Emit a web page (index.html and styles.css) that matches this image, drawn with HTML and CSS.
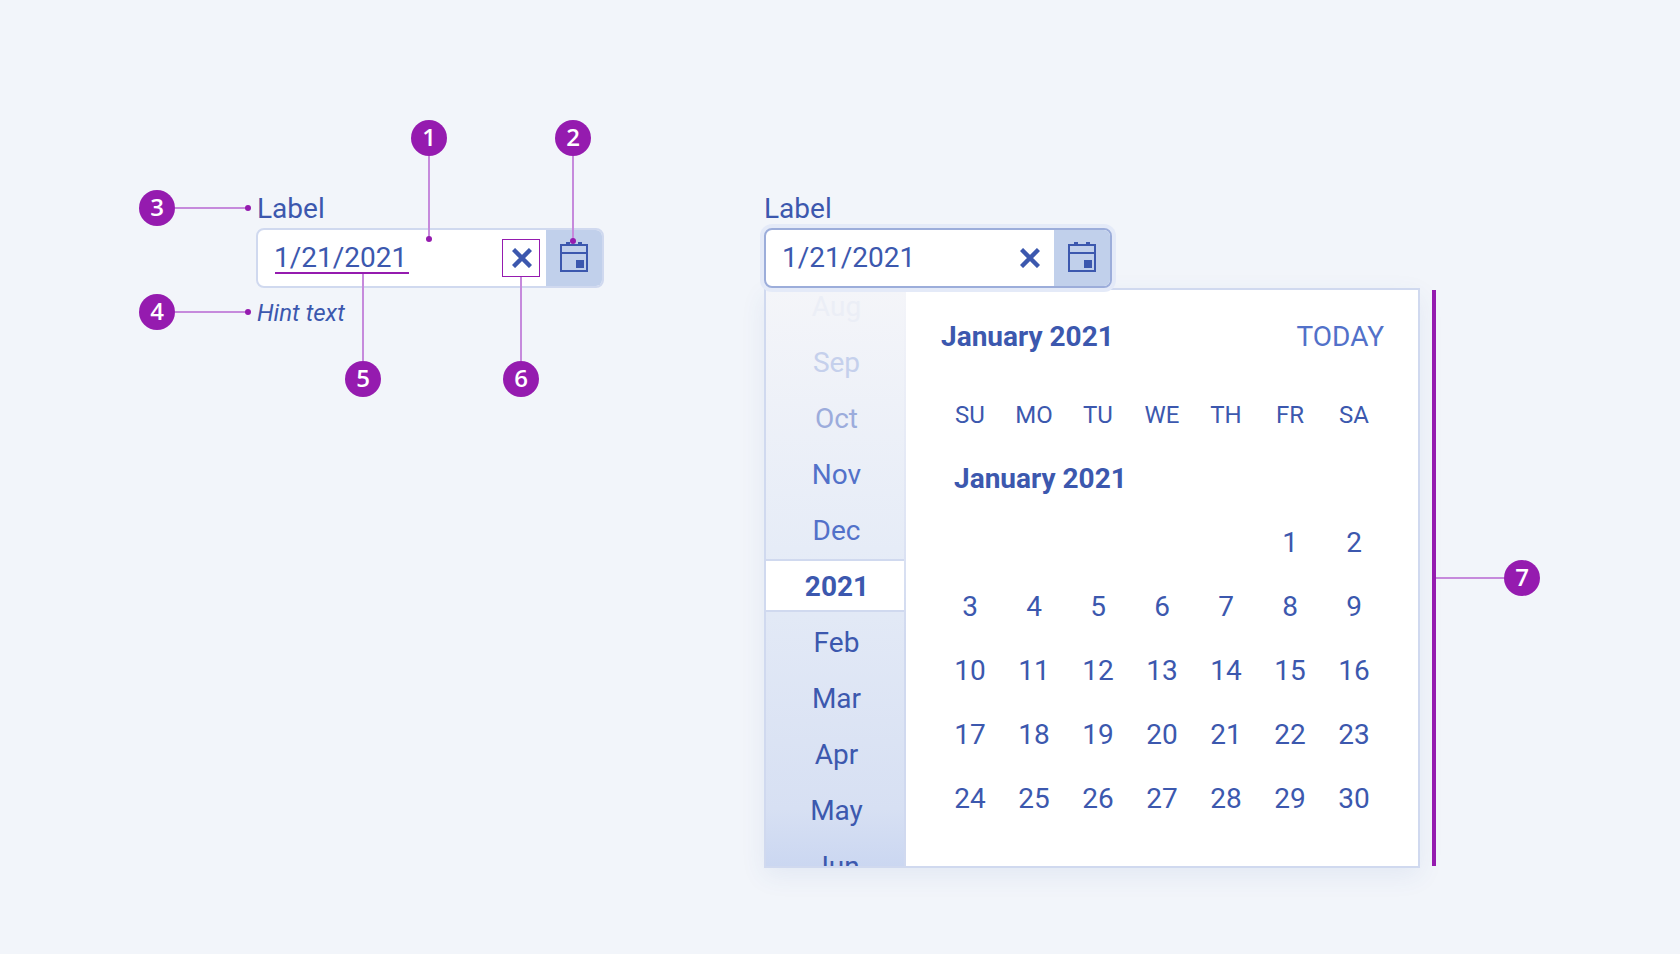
FILE: index.html
```html
<!DOCTYPE html>
<html lang="en">
<head>
  <meta charset="UTF-8" />
  <meta name="viewport" content="width=device-width, initial-scale=1.0"/>
  <title>Date picker anatomy</title>
  <link rel="stylesheet" href="styles.css">
</head>
<body>

  <div class="page">

    <!-- anatomy field -->
    <div class="group group-left">
      <div class="label">Label</div>
      <div class="field">
        <div class="field-value">1/21/2021</div>
        <span class="clear">
          <svg width="20" height="20" viewBox="0 0 20 20"><path d="M1.5 1.5 18.5 18.5M18.5 1.5 1.5 18.5" /></svg>
        </span>
        <span class="cal-button">
          <svg width="28" height="30" viewBox="0 0 28 30">
            <path class="cal-line" d="M1 3H27V29H1ZM1 11H27" />
            <path class="cal-fill" d="M6 0H10V4H6ZM18 0H22V4H18ZM16 18H24V26H16Z" />
          </svg>
        </span>
      </div>
      <div class="hint">Hint text</div>
    </div>

    <!-- open state -->
    <div class="group group-right">
      <div class="label">Label</div>
      <div class="field field-open">
        <div class="field-value">1/21/2021</div>
        <span class="clear">
          <svg width="20" height="20" viewBox="0 0 20 20"><path d="M1.5 1.5 18.5 18.5M18.5 1.5 1.5 18.5" /></svg>
        </span>
        <span class="cal-button">
          <svg width="28" height="30" viewBox="0 0 28 30">
            <path class="cal-line" d="M1 3H27V29H1ZM1 11H27" />
            <path class="cal-fill" d="M6 0H10V4H6ZM18 0H22V4H18ZM16 18H24V26H16Z" />
          </svg>
        </span>
      </div>

      <div class="popup">
        <div class="months">
          <div class="month fade-1">Aug</div>
          <div class="month fade-2">Sep</div>
          <div class="month fade-3">Oct</div>
          <div class="month fade-4">Nov</div>
          <div class="month fade-4">Dec</div>
          <div class="month year">2021</div>
          <div class="month">Feb</div>
          <div class="month">Mar</div>
          <div class="month">Apr</div>
          <div class="month">May</div>
          <div class="month">Jun</div>
        </div>

        <div class="calendar">
          <div class="cal-head">
            <div class="cal-title">January 2021</div>
            <div class="today">TODAY</div>
          </div>
          <div class="weekdays">
            <div>SU</div><div>MO</div><div>TU</div><div>WE</div><div>TH</div><div>FR</div><div>SA</div>
          </div>
          <div class="cal-sub">January 2021</div>
          <div class="days">
            <div></div><div></div><div></div><div></div><div></div><div>1</div><div>2</div>
            <div>3</div><div>4</div><div>5</div><div>6</div><div>7</div><div>8</div><div>9</div>
            <div>10</div><div>11</div><div>12</div><div>13</div><div>14</div><div>15</div><div>16</div>
            <div>17</div><div>18</div><div>19</div><div>20</div><div>21</div><div>22</div><div>23</div>
            <div>24</div><div>25</div><div>26</div><div>27</div><div>28</div><div>29</div><div>30</div>
          </div>
        </div>
      </div>
    </div>

    <!-- callouts -->
    <svg class="callouts" width="1680" height="954" viewBox="0 0 1680 954">
      <g class="leader">
        <path d="M429 156V239" />
        <path d="M573 156V241" />
        <path d="M175 208H248" />
        <path d="M175 312H248" />
        <path d="M363 274V361" />
        <path d="M521 277V361" />
        <path d="M1436 578H1504" />
      </g>
      <g class="dot">
        <circle cx="429" cy="239" r="3" />
        <circle cx="573" cy="241" r="3" />
        <circle cx="248" cy="208" r="3" />
        <circle cx="248" cy="312" r="3" />
      </g>
      <rect class="mark" x="275" y="272" width="134" height="2" />
      <rect class="outline" x="502.5" y="239.5" width="37" height="37" />
      <rect class="mark" x="1432" y="290" width="4" height="576" />
    </svg>

    <span class="badge badge-1">1</span>
    <span class="badge badge-2">2</span>
    <span class="badge badge-3">3</span>
    <span class="badge badge-4">4</span>
    <span class="badge badge-5">5</span>
    <span class="badge badge-6">6</span>
    <span class="badge badge-7">7</span>
  </div>

</body>
</html>
```

FILE: styles.css
```css
:root {
  --bg: #f2f5fa;
  --text: #3c58ae;
  --soft: #5271c9;
  --line: #d0d9ef;
  --focus: #9cadda;
  --button: #c1d0eb;
  --purple: #951baf;
  --leader: #c68adc;
}

* {
  box-sizing: border-box;
}

body {
  margin: 0;
  background-color: var(--bg);
  color: var(--text);
  font-family: Roboto, "Liberation Sans", sans-serif;
  font-size: 28px;
}

.page {
  position: relative;
  display: flex;
  gap: 160px;
  width: 1680px;
  height: 954px;
  padding: 188px 0 0 256px;
  overflow: hidden;
}

.group-left {
  width: 348px;
}

.group-right {
  width: 656px;
}

.label {
  height: 40px;
  line-height: 42px;
}

.group-left .label {
  padding-left: 1px;
}

.field {
  position: relative;
  z-index: 1;
  display: flex;
  align-items: center;
  width: 348px;
  height: 60px;
  background: white;
  border: 2px solid var(--line);
  border-radius: 8px;
}

.field-open {
  border-color: var(--focus);
  box-shadow: 0 0 0 4px #e4eaf8;
}

.field-value {
  flex: 1;
  padding-left: 16px;
  line-height: 56px;
}

.clear {
  display: flex;
  align-items: center;
  justify-content: center;
  width: 38px;
  height: 38px;
  margin-right: 6px;
}

.clear svg {
  margin-left: 2px;
}

.clear path {
  fill: none;
  stroke: var(--text);
  stroke-width: 4.4;
}

.cal-button {
  display: flex;
  align-items: center;
  justify-content: center;
  width: 56px;
  height: 56px;
  background: var(--button);
  border-radius: 0 6px 6px 0;
}

.cal-button svg {
  margin-bottom: 2px;
}

.cal-line {
  fill: none;
  stroke: var(--text);
  stroke-width: 2;
}

.cal-fill {
  fill: var(--text);
}

.hint {
  margin-top: 10px;
  padding-left: 1px;
  font-size: 24px;
  font-style: italic;
  line-height: 30px;
}

.popup {
  display: flex;
  width: 656px;
  height: 580px;
  background: white;
  border: 2px solid var(--line);
  box-shadow: 0 8px 24px rgba(57, 83, 171, 0.08);
}

.months {
  flex: none;
  width: 140px;
  height: 576px;
  overflow: hidden;
  background: linear-gradient(#f4f5f9, #e6ecf7 45%, #d7e0f3 90%, #cbd7f1);
  border-right: 2px solid;
  border-image: linear-gradient(#f4f5f9, #dfe5f4 40%, #d0d9ef 60%) 1;
}

.month {
  height: 56px;
  line-height: 58px;
  padding-left: 3px;
  text-align: center;
}

.month:first-child {
  margin-top: -12px;
}

.fade-1 { color: #ebeef6; }
.fade-2 { color: #c5d0ec; }
.fade-3 { color: #9cacdc; }
.fade-4 { color: var(--soft); }

.year {
  height: 53px;
  margin: 1px -2px 2px 0;
  line-height: 51px;
  padding-left: 2px;
  background: white;
  border-top: 2px solid var(--line);
  border-bottom: 2px solid var(--line);
  font-weight: 700;
}

.calendar {
  flex: 1;
  padding: 0 32px;
}

.cal-head {
  display: flex;
  justify-content: space-between;
  align-items: center;
  height: 93px;
  padding: 0 2px 0 3px;
}

.cal-title, .cal-sub {
  font-weight: 700;
}

.today {
  color: var(--soft);
}

.weekdays, .days {
  display: grid;
  grid-template-columns: repeat(7, 64px);
  text-align: center;
}

.weekdays {
  height: 64px;
  line-height: 64px;
  font-size: 24px;
}

.cal-sub {
  height: 64px;
  line-height: 64px;
  padding-left: 16px;
}

.days {
  grid-auto-rows: 64px;
  line-height: 63px;
}

.callouts {
  position: absolute;
  left: 0;
  top: 0;
  z-index: 2;
  pointer-events: none;
}

.leader path {
  fill: none;
  stroke: var(--leader);
  stroke-width: 2;
}

.dot circle, .mark {
  fill: var(--purple);
}

.outline {
  fill: none;
  stroke: var(--purple);
  stroke-width: 1;
}

.badge {
  position: absolute;
  z-index: 3;
  width: 36px;
  height: 36px;
  line-height: 34px;
  border-radius: 50%;
  background: var(--purple);
  color: white;
  font-family: "Open Sans", sans-serif;
  font-size: 24px;
  font-weight: 600;
  text-align: center;
}

.badge-1 { left: 411px; top: 120px; }
.badge-2 { left: 555px; top: 120px; }
.badge-3 { left: 139px; top: 190px; }
.badge-4 { left: 139px; top: 294px; }
.badge-5 { left: 345px; top: 361px; }
.badge-6 { left: 503px; top: 361px; }
.badge-7 { left: 1504px; top: 560px; }
```
